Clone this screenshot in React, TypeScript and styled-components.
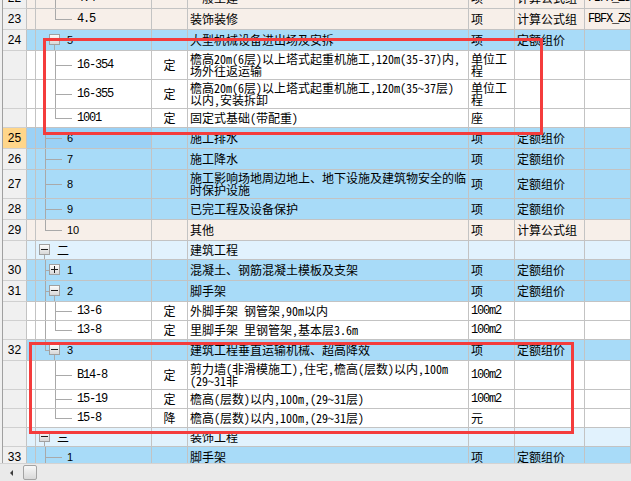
import React from 'react';
import styled, { createGlobalStyle } from 'styled-components';

const GlobalStyle = createGlobalStyle`
  html, body { margin: 0; padding: 0; width: 631px; height: 481px; overflow: hidden; background: #f0f0f0; }
  #root { width: 631px; height: 481px; }
`;

const GRID = '#c3c3c3';
const TREE = '#a9a9a9';
const BG = { beige: '#f7efe9', blue: '#a8dbf8', light: '#e1f2fd', white: '#ffffff' };
type Kind = keyof typeof BG;
type Guide = [number, 'full' | 'top'];

interface RowData {
  num?: string;
  h: number;
  bg: Kind;
  sel?: boolean;
  level: number;
  box?: '+' | '-';
  label: string;
  font: 'mono' | 'sans' | 'cjk';
  guides: Guide[];
  type?: string;
  name: string;
  unit?: string;
  calc?: string;
  code?: string;
}

const rows: RowData[] = [
  { num: '22', h: 20, bg: 'beige', level: 3, label: '4.4', font: 'mono', guides: [[55, 'full']], name: '一般土建', unit: '项', calc: '计算公式组', code: 'FBFX_ZSC' },
  { num: '23', h: 20, bg: 'beige', level: 3, label: '4.5', font: 'mono', guides: [[55, 'top']], name: '装饰装修', unit: '项', calc: '计算公式组', code: 'FBFX_ZSC' },
  { num: '24', h: 20, bg: 'blue', level: 2, box: '-', label: '5', font: 'sans', guides: [], name: '大型机械设备进出场及安拆', unit: '项', calc: '定额组价' },
  { h: 28, bg: 'white', level: 3, label: '16-354', font: 'mono', guides: [[45, 'full'], [55, 'full']], type: '定', name: '檐高20m(6层)以上塔式起重机施工,120m(35-37)内,\n场外往返运输', unit: '单位工\n程' },
  { h: 28, bg: 'white', level: 3, label: '16-355', font: 'mono', guides: [[45, 'full'], [55, 'full']], type: '定', name: '檐高20m(6层)以上塔式起重机施工,120m(35～37层)\n以内,安装拆卸', unit: '单位工\n程' },
  { h: 18, bg: 'white', level: 3, label: '1001', font: 'mono', guides: [[45, 'full'], [55, 'top']], type: '定', name: '固定式基础(带配重)', unit: '座' },
  { num: '25', sel: true, h: 20, bg: 'blue', level: 2, label: '6', font: 'sans', guides: [[45, 'full']], name: '施工排水', unit: '项', calc: '定额组价' },
  { num: '26', h: 20, bg: 'blue', level: 2, label: '7', font: 'sans', guides: [[45, 'full']], name: '施工降水', unit: '项', calc: '定额组价' },
  { num: '27', h: 28, bg: 'blue', level: 2, label: '8', font: 'sans', guides: [[45, 'full']], name: '施工影响场地周边地上、地下设施及建筑物安全的临\n时保护设施', unit: '项', calc: '定额组价' },
  { num: '28', h: 20, bg: 'blue', level: 2, label: '9', font: 'sans', guides: [[45, 'full']], name: '已完工程及设备保护', unit: '项', calc: '定额组价' },
  { num: '29', h: 20, bg: 'beige', level: 2, label: '10', font: 'sans', guides: [[45, 'top']], name: '其他', unit: '项', calc: '计算公式组' },
  { h: 18, bg: 'light', level: 1, box: '-', label: '二', font: 'cjk', guides: [], name: '建筑工程' },
  { num: '30', h: 20, bg: 'blue', level: 2, box: '+', label: '1', font: 'sans', guides: [[45, 'full']], name: '混凝土、钢筋混凝土模板及支架', unit: '项', calc: '定额组价' },
  { num: '31', h: 20, bg: 'blue', level: 2, box: '-', label: '2', font: 'sans', guides: [[45, 'full']], name: '脚手架', unit: '项', calc: '定额组价' },
  { h: 18, bg: 'white', level: 3, label: '13-6', font: 'mono', guides: [[45, 'full'], [55, 'full']], type: '定', name: '外脚手架 钢管架,90m以内', unit: '100m2' },
  { h: 18, bg: 'white', level: 3, label: '13-8', font: 'mono', guides: [[45, 'full'], [55, 'top']], type: '定', name: '里脚手架 里钢管架,基本层3.6m', unit: '100m2' },
  { num: '32', h: 20, bg: 'blue', level: 2, box: '-', label: '3', font: 'sans', guides: [[45, 'top']], name: '建筑工程垂直运输机械、超高降效', unit: '项', calc: '定额组价' },
  { h: 28, bg: 'white', level: 3, label: 'B14-8', font: 'mono', guides: [[55, 'full']], type: '定', name: '剪力墙（非滑模施工）,住宅,檐高(层数)以内,100m\n（29~31非', unit: '100m2' },
  { h: 18, bg: 'white', level: 3, label: '15-19', font: 'mono', guides: [[55, 'full']], type: '定', name: '檐高(层数)以内,100m,(29～31层)', unit: '100m2' },
  { h: 18, bg: 'white', level: 3, label: '15-8', font: 'mono', guides: [[55, 'top']], type: '降', name: '檐高(层数)以内,100m,(29～31层)', unit: '元' },
  { h: 18, bg: 'light', level: 1, box: '-', label: '三', font: 'cjk', guides: [], name: '装饰工程' },
  { num: '33', h: 20, bg: 'blue', level: 2, label: '1', font: 'sans', guides: [[45, 'full']], name: '脚手架', unit: '项', calc: '定额组价' },
];

const Page = styled.div`
  position: relative;
  width: 631px;
  height: 481px;
  display: flex;
  flex-direction: column;
  overflow: hidden;
  font-family: "Noto Sans CJK SC", sans-serif;
  font-size: 12px;
  color: #000;
`;

const Viewport = styled.div`
  flex: 0 0 463px;
  overflow: hidden;
  margin-left: 2px;
  border-left: 1px solid #a0a0a0;
`;

const Rows = styled.div`
  margin-top: -12px;
  display: flex;
  flex-direction: column;
`;

const Row = styled.div<{ $h: number; $bg: string }>`
  display: grid;
  grid-template-columns: 24px 9px 116px 36px 281px 46px 70px 1fr;
  height: ${p => p.$h + 1}px;
  background: ${p => p.$bg};
`;

const Cell = styled.div<{ $bg?: string }>`
  box-sizing: border-box;
  border-right: 1px solid ${GRID};
  border-bottom: 1px solid ${GRID};
  overflow: hidden;
  display: flex;
  align-items: center;
  min-width: 0;
  white-space: pre;
  line-height: 12px;
  background: ${p => p.$bg ?? 'transparent'};
`;

const NumCell = styled(Cell)<{ $sel?: boolean }>`
  justify-content: center;
  background: ${p => (p.$sel ? '#ffd68a' : '#f0f0f0')};
  border-bottom-color: #d0d0d0;
  font-family: "Liberation Sans", Arial, sans-serif;
  font-size: 12px;
`;

const TreeCell = styled(Cell)<{ $pad: number }>`
  position: relative;
  padding-left: ${p => p.$pad}px;
`;

const Guides = styled.svg`
  position: absolute;
  left: 0;
  top: 0;
`;

const Label = styled.span<{ $font: 'mono' | 'sans' | 'cjk' }>`
  position: relative;
  font-family: ${p =>
    p.$font === 'mono'
      ? '"Liberation Mono", monospace'
      : p.$font === 'sans'
      ? '"Liberation Sans", Arial, sans-serif'
      : '"Noto Sans CJK SC", sans-serif'};
  font-size: ${p => (p.$font === 'sans' ? '11px' : '12px')};
  letter-spacing: ${p => (p.$font === 'mono' ? '-1.2px' : '0')};
`;

const TypeCell = styled(Cell)`
  justify-content: center;
`;

const TextCell = styled(Cell)<{ $pad: number }>`
  padding-left: ${p => p.$pad}px;
  font-feature-settings: "hwid" 1;
`;

const Mono = styled.span`
  font-family: "Liberation Mono", monospace;
  letter-spacing: -1.2px;
`;

const HScroll = styled.div`
  flex: 0 0 18px;
  box-sizing: border-box;
  display: flex;
  align-items: center;
  background: #eaeaea;
  border-top: 1px solid #d3d3d3;
`;

const Arrow = styled.div`
  width: 0;
  height: 0;
  margin-left: 10px;
  border-top: 3px solid transparent;
  border-bottom: 3px solid transparent;
  border-right: 3px solid #3c3c3c;
`;

const Thumb = styled.div`
  width: 14px;
  height: 15px;
  margin-left: 10px;
  box-sizing: border-box;
  border: 1px solid #a3a3a3;
  border-radius: 2px;
  background: linear-gradient(#f8f8f8, #d8d8d8);
`;

const Mark = styled.div<{ $x: number; $y: number; $w: number; $h: number }>`
  position: absolute;
  left: ${p => p.$x}px;
  top: ${p => p.$y}px;
  width: ${p => p.$w}px;
  height: ${p => p.$h}px;
  box-sizing: border-box;
  border: 3px solid #f43c3c;
  pointer-events: none;
`;

const TreeDrawing: React.FC<{ r: RowData }> = ({ r }) => {
  const h = r.h;
  const mid = Math.floor(h / 2) + 0.5;
  const lx = (gx: number) => gx - 36 + 0.5;
  const parentX = 35 + 10 * (r.level - 1);
  const hasParent = r.guides.some(g => g[0] === parentX);
  const bx = 3 + 10 * (r.level - 1);
  const by = Math.floor((h - 11) / 2);
  const gid = `bg${r.label}${r.level}`;
  return (
    <Guides width={115} height={h} shapeRendering="crispEdges">
      <defs>
        <linearGradient id={gid} x1="0" y1="0" x2="0" y2="1">
          <stop offset="0" stopColor="#fdfdfd" />
          <stop offset="1" stopColor="#d6d6d6" />
        </linearGradient>
      </defs>
      {r.guides.map(([gx, kind], i) => (
        <line key={i} x1={lx(gx)} x2={lx(gx)} y1={0} y2={kind === 'full' ? h : mid} stroke={TREE} />
      ))}
      {!r.box && (
        <line x1={lx(parentX)} x2={6 + 10 * r.level} y1={mid} y2={mid} stroke={TREE} />
      )}
      {r.box && hasParent && (
        <line x1={lx(parentX)} x2={bx} y1={mid} y2={mid} stroke={TREE} />
      )}
      {r.box && (
        <g>
          {r.box === '-' && (
            <line x1={bx + 5.5} x2={bx + 5.5} y1={by + 11} y2={h} stroke={TREE} />
          )}
          <rect x={bx + 0.5} y={by + 0.5} width={10} height={10} fill={`url(#${gid})`} stroke="#a0a0a0" />
          <line x1={bx + 2} x2={bx + 9} y1={by + 5.5} y2={by + 5.5} stroke="#1e1e1e" />
          {r.box === '+' && (
            <line x1={bx + 5.5} x2={bx + 5.5} y1={by + 2} y2={by + 9} stroke="#1e1e1e" />
          )}
        </g>
      )}
    </Guides>
  );
};

const isMono = (s?: string) => !!s && /^[0-9A-Za-z_]+$/.test(s);

export default function App() {
  return (
    <Page>
      <GlobalStyle />
      <Viewport>
        <Rows>
          {rows.map((r, i) => {
            const bg = BG[r.bg];
            const selBg = r.sel ? '#9bd1f6' : undefined;
            return (
              <Row key={i} $h={r.h} $bg={bg}>
                <NumCell $sel={r.sel}>{r.num ?? ''}</NumCell>
                <Cell $bg={selBg} />
                <TreeCell $bg={selBg} $pad={11 + 10 * r.level}>
                  <TreeDrawing r={r} />
                  <Label $font={r.font}>{r.label}</Label>
                </TreeCell>
                <TypeCell>{r.type ?? ''}</TypeCell>
                <TextCell $pad={2}>{r.name}</TextCell>
                <TextCell $pad={2}>
                  {isMono(r.unit) ? <Mono>{r.unit}</Mono> : r.unit ?? ''}
                </TextCell>
                <TextCell $pad={2}>{r.calc ?? ''}</TextCell>
                <TextCell $pad={3}>{r.code ? <Mono>{r.code}</Mono> : ''}</TextCell>
              </Row>
            );
          })}
        </Rows>
      </Viewport>
      <HScroll>
        <Arrow />
        <Thumb />
      </HScroll>
      <Mark $x={43} $y={38} $w={500} $h={97} />
      <Mark $x={29} $y={342} $w={545} $h={92} />
    </Page>
  );
}
